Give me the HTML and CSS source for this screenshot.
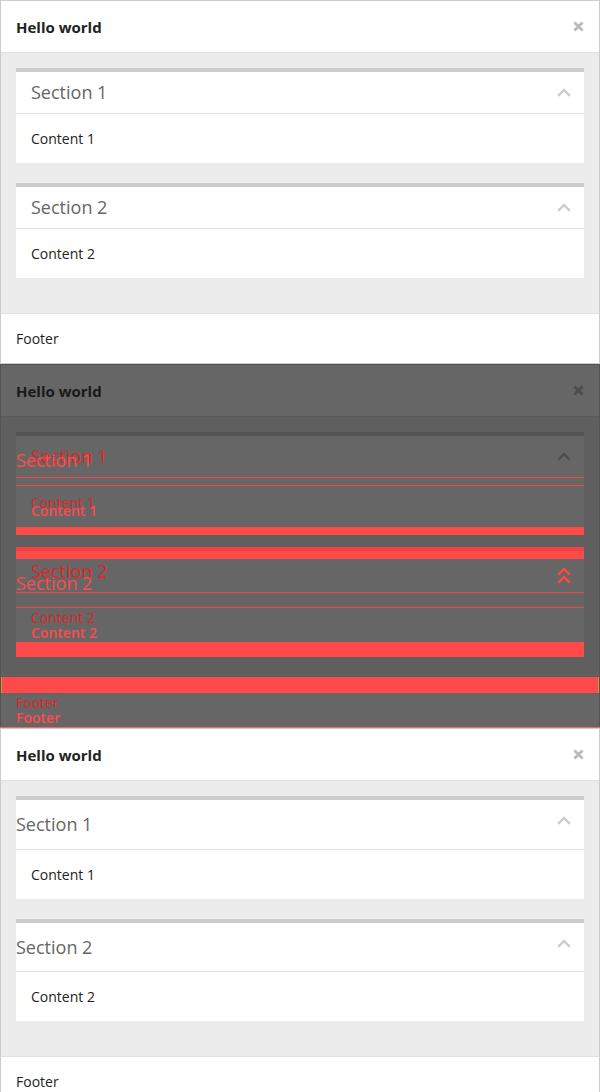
FILE: index.html
```html
<!DOCTYPE html>
<html lang="en">
<head>
<meta charset="utf-8">
<title>Visual diff</title>
<link rel="stylesheet" href="styles.css">
</head>
<body>
<div class="shot">

  <section class="panel">
    <div class="layer modal">
      <header class="modal-header">
        <span class="modal-title">Hello world</span>
        <svg class="close" viewBox="0 0 10 10"><path d="M1.3 1.3L8.7 8.7M8.7 1.3L1.3 8.7" stroke="currentColor" stroke-width="2.6" fill="none"/></svg>
      </header>
      <div class="modal-body">
        <div class="card">
          <div class="card-header"><span class="card-title">Section 1</span><svg class="chevron" viewBox="0 0 14 9"><path d="M1.2 7.8L7 2L12.8 7.8" stroke="currentColor" stroke-width="2.4" fill="none"/></svg></div>
          <div class="card-content">Content 1</div>
        </div>
        <div class="card">
          <div class="card-header"><span class="card-title">Section 2</span><svg class="chevron" viewBox="0 0 14 9"><path d="M1.2 7.8L7 2L12.8 7.8" stroke="currentColor" stroke-width="2.4" fill="none"/></svg></div>
          <div class="card-content">Content 2</div>
        </div>
      </div>
      <footer class="modal-footer">Footer</footer>
    </div>
  </section>

  <section class="panel panel-diff">
    <div class="layer modal modal--dim">
      <header class="modal-header">
        <span class="modal-title">Hello world</span>
        <svg class="close" viewBox="0 0 10 10"><path d="M1.3 1.3L8.7 8.7M8.7 1.3L1.3 8.7" stroke="currentColor" stroke-width="2.6" fill="none"/></svg>
      </header>
      <div class="modal-body">
        <div class="card">
          <div class="card-header"><span class="card-title">Section 1</span><svg class="chevron" viewBox="0 0 14 9"><path d="M1.2 7.8L7 2L12.8 7.8" stroke="currentColor" stroke-width="2.4" fill="none"/></svg></div>
          <div class="card-content">Content 1</div>
        </div>
        <div class="card">
          <div class="card-header"><span class="card-title">Section 2</span><svg class="chevron is-diff" viewBox="0 0 14 9"><path d="M1.2 7.8L7 2L12.8 7.8" stroke="currentColor" stroke-width="2.4" fill="none"/></svg></div>
          <div class="card-content">Content 2</div>
        </div>
      </div>
      <footer class="modal-footer">Footer</footer>
    </div>

    <div class="layer bands">
      <div class="band band-1"></div>
      <div class="band band-2"></div>
      <div class="band band-3"></div>
      <div class="band band-4"></div>
      <div class="band band-5"></div>
    </div>

    <div class="layer modal modal--actual modal--ghost">
      <header class="modal-header">
        <span class="modal-title">Hello world</span>
        <svg class="close" viewBox="0 0 10 10"><path d="M1.3 1.3L8.7 8.7M8.7 1.3L1.3 8.7" stroke="currentColor" stroke-width="2.6" fill="none"/></svg>
      </header>
      <div class="modal-body">
        <div class="card">
          <div class="card-header"><span class="card-title">Section 1</span><svg class="chevron" viewBox="0 0 14 9"><path d="M1.2 7.8L7 2L12.8 7.8" stroke="currentColor" stroke-width="2.4" fill="none"/></svg></div>
          <div class="card-content">Content 1</div>
        </div>
        <div class="card">
          <div class="card-header"><span class="card-title">Section 2</span><svg class="chevron is-diff" viewBox="0 0 14 9"><path d="M1.2 7.8L7 2L12.8 7.8" stroke="currentColor" stroke-width="2.4" fill="none"/></svg></div>
          <div class="card-content">Content 2</div>
        </div>
      </div>
      <footer class="modal-footer">Footer</footer>
    </div>
  </section>

  <section class="panel">
    <div class="layer modal modal--actual">
      <header class="modal-header">
        <span class="modal-title">Hello world</span>
        <svg class="close" viewBox="0 0 10 10"><path d="M1.3 1.3L8.7 8.7M8.7 1.3L1.3 8.7" stroke="currentColor" stroke-width="2.6" fill="none"/></svg>
      </header>
      <div class="modal-body">
        <div class="card">
          <div class="card-header"><span class="card-title">Section 1</span><svg class="chevron" viewBox="0 0 14 9"><path d="M1.2 7.8L7 2L12.8 7.8" stroke="currentColor" stroke-width="2.4" fill="none"/></svg></div>
          <div class="card-content">Content 1</div>
        </div>
        <div class="card">
          <div class="card-header"><span class="card-title">Section 2</span><svg class="chevron" viewBox="0 0 14 9"><path d="M1.2 7.8L7 2L12.8 7.8" stroke="currentColor" stroke-width="2.4" fill="none"/></svg></div>
          <div class="card-content">Content 2</div>
        </div>
      </div>
      <footer class="modal-footer">Footer</footer>
    </div>
  </section>

</div>
</body>
</html>
```

FILE: styles.css
```css
html, body {
  margin: 0;
  padding: 0;
  background: #fff;
}

body {
  font-family: "Open Sans", "Liberation Sans", sans-serif;
}

.shot {
  width: 600px;
}

.panel {
  height: 364px;
  overflow: hidden;
  display: grid;
  grid-template-columns: 600px;
  align-items: start;
}

.layer {
  grid-area: 1 / 1;
  min-height: 0;
}

/* ---------- modal component ---------- */
.modal {
  border: 1px solid #ccc;
  background: #fff;
  color: #222;
}

.modal-header {
  height: 51px;
  display: flex;
  align-items: center;
  justify-content: space-between;
  padding: 0 15px;
  border-bottom: 1px solid #e0e0e0;
}

.modal-title {
  font-weight: 700;
  font-size: 15px;
}

.close {
  display: block;
  width: 11px;
  height: 11px;
  color: #bbb;
}

.modal-body {
  background: #ececec;
  padding: 15px;
}

.card {
  border-top: 4px solid #ccc;
  background: #fff;
  margin-bottom: 20px;
}

.card-header {
  display: flex;
  justify-content: space-between;
  align-items: flex-start;
  height: 41px;
  padding: 0 13px 0 15px;
  border-bottom: 1px solid #e2e2e2;
}

.card-title {
  font-size: 18px;
  line-height: 41px;
  color: #666;
}

.chevron {
  display: block;
  width: 14px;
  height: 9px;
  margin-top: 16px;
  color: #ccc;
}

.card-content {
  padding: 15px;
  font-size: 14px;
  line-height: 19px;
}

.modal-footer {
  border-top: 1px solid #e0e0e0;
  padding: 15px;
  font-size: 14px;
  line-height: 19px;
}

/* ---------- actual (changed) layout ---------- */
.modal--actual .card-header {
  height: 48.5px;
  padding-left: 0;
}

.modal--actual .card-title {
  line-height: 48.5px;
}

/* ---------- diff: dimmed expected ---------- */
.modal--dim {
  border-color: #535353;
  background: #666;
  color: #1a1a1a;
}

.modal--dim .modal-header {
  border-bottom-color: #5a5a5a;
}

.modal--dim .close {
  color: #4d4d4d;
}

.modal--dim .modal-body {
  background: #5f5f5f;
}

.modal--dim .card {
  border-top-color: #535353;
  background: #666;
}

.modal--dim .card-header {
  border-bottom-color: #f04848;
}

.modal--dim .card-title,
.modal--dim .card-content,
.modal--dim .modal-footer {
  color: #e02424;
}

.modal--dim .modal-footer {
  border-top-color: #5a5a5a;
}

.modal--dim .chevron {
  color: #4f4f4f;
}

/* ---------- diff: ghost of actual ---------- */
.modal--ghost {
  border-color: transparent;
  background: transparent;
  color: transparent;
}

.modal--ghost .modal-header {
  border-bottom-color: transparent;
}

.modal--ghost .close {
  visibility: hidden;
}

.modal--ghost .modal-body {
  background: transparent;
}

.modal--ghost .card {
  border-top-color: transparent;
  background: transparent;
}

.modal--ghost .card-header {
  border-bottom-color: #f04848;
}

.modal--ghost .card-title,
.modal--ghost .card-content,
.modal--ghost .modal-footer {
  color: #ff4b4b;
  font-weight: 600;
}

.modal--ghost .card-title {
  font-weight: 500;
}

.modal--ghost .modal-footer {
  border-top-color: transparent;
}

.modal--ghost .chevron {
  visibility: hidden;
}

.modal--dim .chevron.is-diff,
.modal--ghost .chevron.is-diff {
  visibility: visible;
  color: #ff4848;
}

/* ---------- diff bands ---------- */
.bands {
  display: flex;
  flex-direction: column;
}

.band {
  background: #ff4a4a;
  margin-left: 16px;
  margin-right: 16px;
  flex: none;
}

.band-1 {
  margin-top: 163px;
  height: 8px;
}

.band-2 {
  margin-top: 12px;
  height: 8px;
  border-top: 4px solid #f04242;
}

.band-3 {
  margin-top: 83px;
  height: 15px;
}

.band-4 {
  margin-top: 20px;
  height: 16px;
  margin-left: 1px;
  margin-right: 1px;
  border-left: 1px solid #d8913a;
  border-right: 1px solid #d8913a;
}

.band-5 {
  margin-top: 34px;
  height: 1px;
  margin-left: 0;
  margin-right: 0;
  background: #e86a6a;
}
```
